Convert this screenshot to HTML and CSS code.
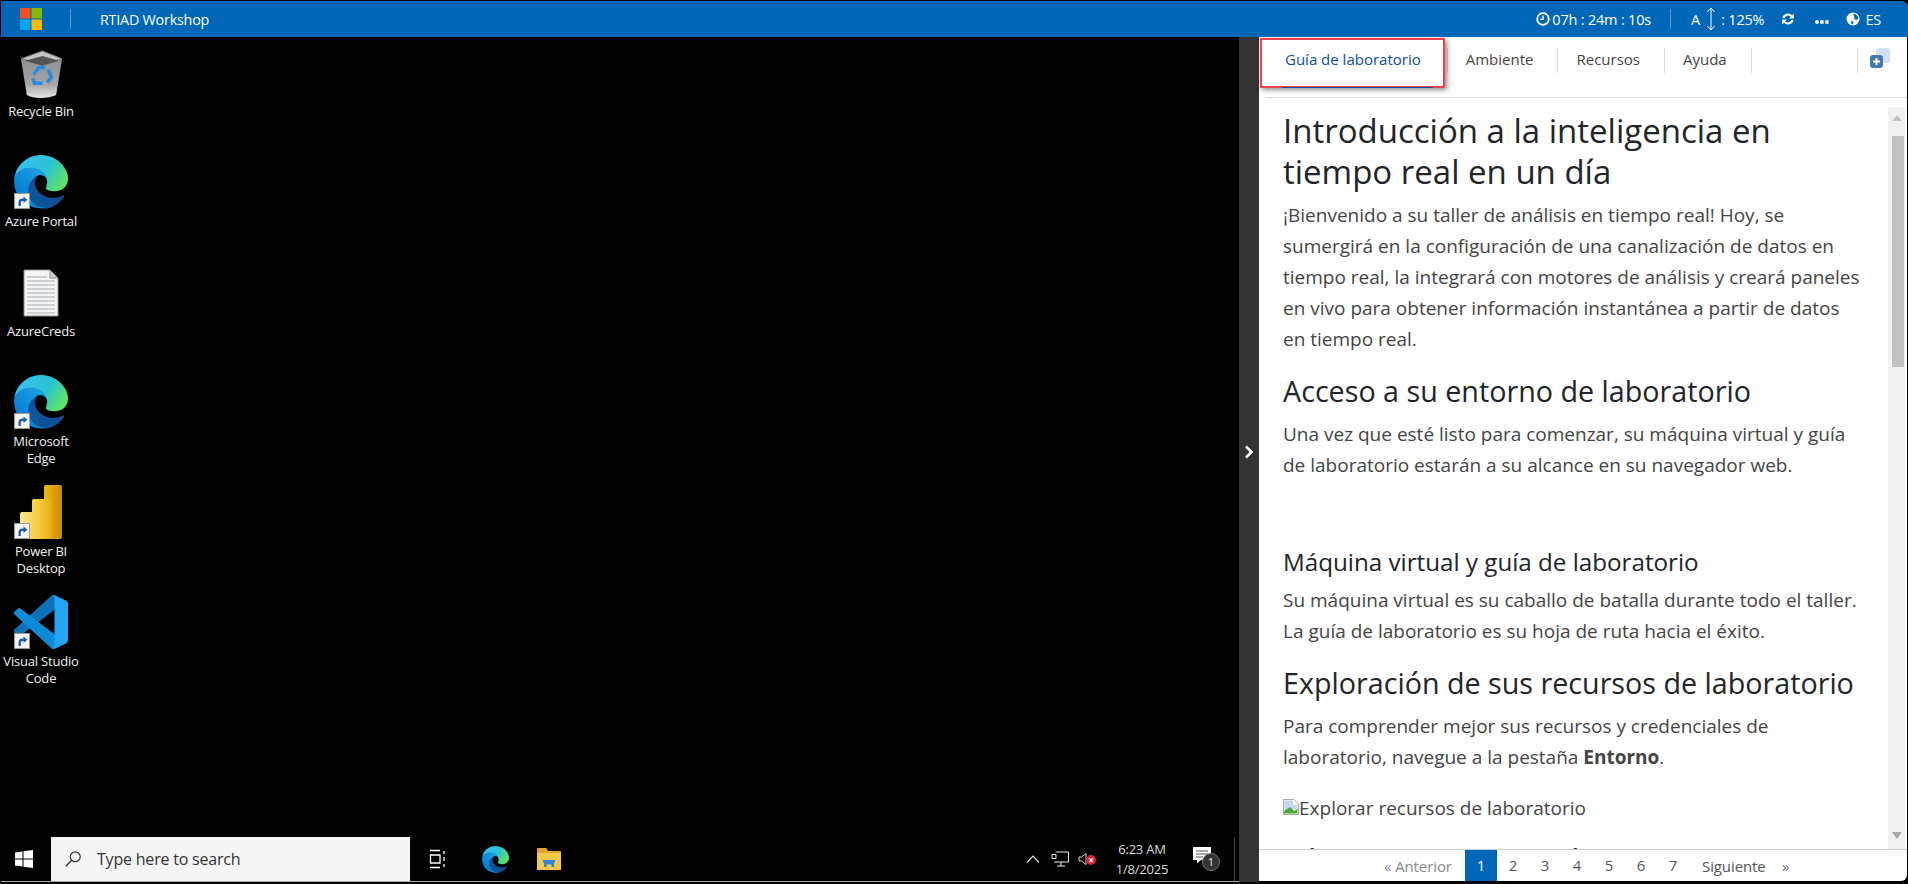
FILE: index.html
```html
<!DOCTYPE html>
<html>
<head>
	<title>RTIAD Workshop</title>
	<meta charset="utf-8">
	<link rel="stylesheet" href="styles.css">
</head>
<body>
<svg class="defs" width="0" height="0">
	<defs>
		<linearGradient id="edgeBottom" x1="0" y1="1" x2="1" y2="0.6"><stop offset="0" stop-color="#0c59a4"/><stop offset="1" stop-color="#114a8b"/></linearGradient>
		<linearGradient id="edgeMid" x1="0.8" y1="0.3" x2="0.1" y2="0.9"><stop offset="0" stop-color="#1b9de2"/><stop offset="1" stop-color="#0078d4"/></linearGradient>
		<linearGradient id="edgeTop" x1="0.1" y1="0.2" x2="1" y2="0.6"><stop offset="0" stop-color="#35c1f1"/><stop offset="0.55" stop-color="#2bc3d2"/><stop offset="1" stop-color="#5be566"/></linearGradient>
		<linearGradient id="binBody" x1="0" y1="0" x2="0" y2="1"><stop offset="0" stop-color="#8b8b8b"/><stop offset="0.7" stop-color="#a5a5a5"/><stop offset="1" stop-color="#e4e4e4"/></linearGradient>
		<linearGradient id="bar1" x1="0" y1="0" x2="1" y2="0"><stop offset="0" stop-color="#f2b90e"/><stop offset="1" stop-color="#c98a06"/></linearGradient>
		<linearGradient id="bar2" x1="0" y1="0" x2="1" y2="0"><stop offset="0" stop-color="#fbd84f"/><stop offset="1" stop-color="#e8ad12"/></linearGradient>
		<linearGradient id="bar3" x1="0" y1="0" x2="1" y2="0"><stop offset="0" stop-color="#fde98f"/><stop offset="1" stop-color="#f6ca3d"/></linearGradient>
		<symbol id="edge" viewBox="0 0 260 260">
			<path fill="url(#edgeBottom)" d="M235.68 195.46a93.73 93.73 0 0 1-10.54 4.71 101.87 101.87 0 0 1-35.9 6.46c-47.32 0-88.54-32.55-88.54-74.32A31.48 31.48 0 0 1 117.13 105c-42.8 1.8-53.8 46.4-53.8 72.53 0 73.88 68.09 81.37 82.76 81.37 7.91 0 19.84-2.3 27-4.56l1.31-.44a128.34 128.34 0 0 0 66.6-52.8 4 4 0 0 0-5.32-5.64z"/>
			<path fill="url(#edgeMid)" d="M105.73 241.42A79.2 79.2 0 0 1 83 220.1a80.58 80.58 0 0 1 29.47-119.8c3.12-1.47 8.45-4.13 15.54-4a32.35 32.35 0 0 1 25.69 13 31.88 31.88 0 0 1 6.36 18.66c0-.21 24.46-79.6-80-79.6-43.9 0-80 41.66-80 78.21a130.15 130.15 0 0 0 12.11 56 128 128 0 0 0 156.38 67.11 75.55 75.55 0 0 1-62.78-8.28z"/>
			<path fill="url(#edgeTop)" d="M156.33 153.32c-.81 1.05-3.3 2.5-3.3 5.66 0 2.61 1.7 5.12 4.72 7.23 14.38 10 41.49 8.68 41.56 8.68a59.56 59.56 0 0 0 30.3-8.36A61.38 61.38 0 0 0 260 114.13c.26-22.41-8-37.31-11.34-43.91C227.46 28.76 181.7 0 128 0A128 128 0 0 0 0 126.2c.52-36.54 36.8-66.05 80-66.05 3.5 0 23.46.34 42 10.07a72.57 72.57 0 0 1 30.92 29.34c6.11 10.64 7.2 24.1 7.2 29.46s-2.73 13.31-3.79 14.3z"/>
		</symbol>
		<symbol id="shortcut" viewBox="0 0 16 16">
			<rect x="0.5" y="0.5" width="15" height="15" fill="#f4f4f4" stroke="#9a9a9a"/>
			<path d="M4.5 13v-3.5c0-2.5 1.500-4 4-4H9.500V3.500L13.500 6.800 9.500 10V8H8.500C7 8 6.800 9 6.800 10.500V13z" fill="#1f5fa8"/>
		</symbol>
	</defs>
</svg>

<div class="topbar">
	<svg class="ms-logo" viewBox="0 0 22 22" width="22" height="22">
		<rect width="10.500" height="10.500" fill="#f25022"/><rect x="11.500" width="10.500" height="10.500" fill="#7fba00"/>
		<rect y="11.500" width="10.500" height="10.500" fill="#00a4ef"/><rect x="11.500" y="11.500" width="10.500" height="10.500" fill="#ffb900"/>
	</svg>
	<span class="top-sep first"></span>
	<span class="top-title">RTIAD Workshop</span>
	<div class="top-right">
		<svg class="t-clock" viewBox="0 0 14 14" width="14" height="14"><circle cx="7" cy="7" r="5.800" fill="none" stroke="#fff" stroke-width="1.800"/><path d="M7 3.500V7.300H4.200" fill="none" stroke="#fff" stroke-width="1.400"/></svg>
		<span class="t-timer">07h : 24m : 10s</span>
		<span class="top-sep"></span>
		<span class="t-a">A</span>
		<svg class="t-arrow" viewBox="0 0 10 24" width="10" height="24"><path d="M5 1V23M1.500 5L5 1L8.500 5M1.500 19L5 23L8.500 19" fill="none" stroke="#fff" stroke-width="1"/></svg>
		<span class="t-zoom">: 125%</span>
		<svg class="t-refresh" viewBox="0 0 14 14" width="14" height="14"><path d="M1.500 6A5.500 5 0 0 1 11 3.200L13 1.500V6.500H8L9.700 4.800A3.400 3.200 0 0 0 3.800 6zM12.500 8A5.500 5 0 0 1 3 10.800L1 12.500V7.500H6L4.300 9.200A3.400 3.200 0 0 0 10.200 8z" fill="#fff"/></svg>
		<span class="t-dots"><i></i><i></i><i></i></span>
		<svg class="t-globe" viewBox="0 0 14 14" width="14" height="14"><circle cx="7" cy="7" r="6.500" fill="#fff"/><path d="M7.500 1.500C10 2 12 4 12.500 6.500L10.500 8 8.500 7 8 4.500zM5 8.500L7.500 10 7 12.500 5.500 12z" fill="#0067b8"/></svg>
		<span class="t-lang">ES</span>
	</div>
</div>

<div class="main">
	<div class="desktop">
		<div class="icons">
			<div class="dicon">
				<div class="dpic">
					<svg viewBox="0 0 46 50" width="45" height="49"><path d="M2 9L24 1 44 9 38 46C30 50 14 50 8 46z" fill="url(#binBody)"/><path d="M2 9L24 1 44 9 24 14z" fill="#c4c4c4" stroke="#777"/><path d="M6 11L24 16 41 11 24 6z" fill="#555"/>
						<g fill="none" stroke="#1f8ee8" stroke-width="3.500"><path d="M15 25L20 18H27"/><path d="M30 20L33 28 29 33"/><path d="M24 34H16L14 29"/></g></svg>
				</div>
				<span>Recycle Bin</span>
			</div>
			<div class="dicon">
				<div class="dpic"><svg width="54" height="54"><use href="#edge"/></svg><svg class="sc" width="16" height="16"><use href="#shortcut"/></svg></div>
				<span>Azure Portal</span>
			</div>
			<div class="dicon">
				<div class="dpic">
					<svg class="doc" viewBox="0 0 36 48" width="36" height="48"><path d="M1 1H27L35 9V47H1z" fill="#f6f6f6" stroke="#8c8c8c"/><path d="M27 1V9H35z" fill="#d0d0d0" stroke="#8c8c8c"/>
						<path d="M4 8H24M4 12H32M4 16H32M4 20H32M4 24H32M4 28H32M4 32H32M4 36H32M4 40H32M4 44H32" stroke="#bcc2c6" stroke-width="1.500"/></svg>
				</div>
				<span>AzureCreds</span>
			</div>
			<div class="dicon">
				<div class="dpic"><svg width="54" height="54"><use href="#edge"/></svg><svg class="sc" width="16" height="16"><use href="#shortcut"/></svg></div>
				<span>Microsoft<br>Edge</span>
			</div>
			<div class="dicon">
				<div class="dpic">
					<svg viewBox="0 0 42 54" width="42" height="54"><rect x="24" width="18" height="54" rx="2" fill="url(#bar1)"/><rect x="12" y="14" width="20" height="40" rx="2" fill="url(#bar2)"/><rect y="27" width="19" height="27" rx="2" fill="url(#bar3)"/></svg>
					<svg class="sc pbi" width="16" height="16"><use href="#shortcut"/></svg>
				</div>
				<span>Power BI<br>Desktop</span>
			</div>
			<div class="dicon">
				<div class="dpic">
					<svg viewBox="0 0 100 100" width="54" height="54">
						<path fill="#0b72b9" d="M96.46 10.800L75.860 .87a6.200 6.200 0 0 0-7.100 1.200L1.360 63.580a4.170 4.170 0 0 0 0 6.160l5.500 5.010a4.170 4.170 0 0 0 5.330.24L93.400 13.330a4.140 4.140 0 0 1 6.600 3.080v-.24a6.250 6.250 0 0 0-3.540-5.370z"/>
						<path fill="#0e8ad8" d="M96.460 89.200L75.860 99.130a6.200 6.200 0 0 1-7.100-1.200L1.360 36.420a4.170 4.170 0 0 1 0-6.160l5.500-5.010a4.170 4.170 0 0 1 5.330-.24L93.400 86.670a4.140 4.140 0 0 0 6.600-3.080v.24a6.250 6.250 0 0 1-3.540 5.370z"/>
						<path fill="#23a5f5" d="M75.870 99.130a6.200 6.200 0 0 1-7.100-1.200C71.070 100.230 75 98.600 75 95.330V4.670c0-3.270-3.930-4.900-6.230-2.600a6.200 6.200 0 0 1 7.100-1.200l20.590 9.900A6.250 6.250 0 0 1 100 16.410v67.170a6.250 6.250 0 0 1-3.540 5.630z"/>
					</svg>
					<svg class="sc" width="16" height="16"><use href="#shortcut"/></svg>
				</div>
				<span>Visual Studio<br>Code</span>
			</div>
		</div>

		<div class="taskbar">
			<svg class="tb-win" viewBox="0 0 18 18" width="18" height="18"><path d="M0 2.500L7.500 1.400V8.500H0zM8.500 1.300L18 0V8.500H8.500zM0 9.500H7.500V16.600L0 15.500zM8.500 9.500H18V18L8.500 16.700z" fill="#fff"/></svg>
			<div class="tb-search">
				<svg viewBox="0 0 20 20" width="18" height="18"><circle cx="12.500" cy="7.500" r="5.500" fill="none" stroke="#333" stroke-width="1.300"/><path d="M8.500 11.500L2 18" stroke="#333" stroke-width="1.500"/></svg>
				<span>Type here to search</span>
			</div>
			<svg class="tb-view" viewBox="0 0 18 20" width="18" height="20"><path d="M1 1.500H11M1 18.500H11M1.500 6H11V14H1.500z M15 2V5M15 8V12M15 15V18" fill="none" stroke="#fff" stroke-width="1.300"/></svg>
			<svg class="tb-edge" width="27" height="27"><use href="#edge"/></svg>
			<svg class="tb-folder" viewBox="0 0 24 24" width="24" height="24"><path d="M0 1H9L11 4H24V23H0z" fill="#f3c94b"/><path d="M0 1H9L11 4H24V6H0z" fill="#e2a52b"/><path d="M7 20V15H17V20H14.500V17.500H9.500V20z" fill="#2b88d8"/><rect x="6" y="13" width="12" height="2.500" fill="#2b88d8"/></svg>
			<div class="tray">
				<svg class="tr-up" viewBox="0 0 14 8" width="14" height="8"><path d="M1 7.500L7 1.200 13 7.500" fill="none" stroke="#ddd" stroke-width="1.200"/></svg>
				<svg class="tr-net" viewBox="0 0 18 16" width="18" height="16"><path d="M4.500 1H17.500V11H3M10 11V15M6 15H14M1 3.500H5V7.500H1z" fill="none" stroke="#eee"/></svg>
				<div class="tr-vol">
					<svg viewBox="0 0 10 14" width="10" height="14"><path d="M1 5H3.500L8 1.500V12.500L3.500 9H1z" fill="none" stroke="#ddd"/></svg>
					<span class="tr-x">×</span>
				</div>
				<div class="tr-time"><span>6:23 AM</span><span>1/8/2025</span></div>
				<div class="tr-note">
					<svg viewBox="0 0 18 17" width="18" height="17"><path d="M0 0H18V13H8L4 16.500V13H0z" fill="#fff"/><path d="M3 4H15M3 7H15M3 10H10" stroke="#555"/></svg>
					<span class="tr-badge">1</span>
				</div>
				<span class="tr-line"></span>
			</div>
		</div>
	</div>

	<div class="splitter">
		<svg viewBox="0 0 10 14" width="10" height="14"><path d="M2 1.500L7.500 7 2 12.500" fill="none" stroke="#fff" stroke-width="2.600"/></svg>
	</div>

	<div class="panel">
		<div class="tabs">
			<span class="tab active">Guía de laboratorio</span>
			<span class="tab">Ambiente</span>
			<span class="tab">Recursos</span>
			<span class="tab">Ayuda</span>
			<div class="tab-tool">
				<svg viewBox="0 0 20 20" width="20" height="20"><rect x="6" y="0" width="14" height="15" rx="3" fill="#d3e0f2"/><rect x="0" y="7" width="13" height="13" rx="3" fill="#4277b5"/><path d="M6.500 10V17M3 13.500H10" stroke="#fff" stroke-width="2"/></svg>
			</div>
			<span class="redbox"></span>
		</div>
		<div class="body">
			<div class="guide">
				<h1>Introducción a la inteligencia en tiempo real en un día</h1>
				<p>¡Bienvenido a su taller de análisis en tiempo real! Hoy, se sumergirá en la configuración de una canalización de datos en tiempo real, la integrará con motores de análisis y creará paneles en vivo para obtener información instantánea a partir de datos en tiempo real.</p>
				<h2>Acceso a su entorno de laboratorio</h2>
				<p>Una vez que esté listo para comenzar, su máquina virtual y guía de laboratorio estarán a su alcance en su navegador web.</p>
				<h3>Máquina virtual y guía de laboratorio</h3>
				<p>Su máquina virtual es su caballo de batalla durante todo el taller. La guía de laboratorio es su hoja de ruta hacia el éxito.</p>
				<h2>Exploración de sus recursos de laboratorio</h2>
				<p>Para comprender mejor sus recursos y credenciales de laboratorio, navegue a la pestaña <b>Entorno</b>.</p>
				<p class="broken">
					<svg viewBox="0 0 16 16" width="16" height="16"><path d="M.5.5H11L15.500 5V15.500H.5z" fill="#fff" stroke="#a8a8a8"/><path d="M1.500 1.500H10V6H14.500V10L1.500 12z" fill="#c4d6f0"/><path d="M1 14.500V12L7 8 11 12 14.500 10V14.500z" fill="#4fa83d"/></svg>Explorar recursos de laboratorio
				</p>
				<h2>Cómo utilizar la función de aumento</h2>
			</div>
			<div class="scroll">
				<span class="arr up"></span>
				<span class="thumb"></span>
				<span class="arr down"></span>
			</div>
		</div>
		<div class="pager">
			<span class="prev">« Anterior</span>
			<span class="num on">1</span>
			<span class="num">2</span>
			<span class="num">3</span>
			<span class="num">4</span>
			<span class="num">5</span>
			<span class="num">6</span>
			<span class="num">7</span>
			<span class="next">Siguiente</span>
			<span class="last">»</span>
		</div>
	</div>
</div>
</body>
</html>
```

FILE: styles.css
```css
body {
	margin: 0;
	padding: 0;
	width: 1908px;
	height: 884px;
	overflow: hidden;
	background: #000;
	font-family: "Open Sans", "Noto Sans", sans-serif;
}
.defs { display: block; height: 0; }

.topbar {
	height: 36px;
	margin: 1px 0 0 1px;
	background: #0067b8;
	color: #fff;
	display: flex;
	align-items: center;
	font-size: 14.500px;
	border-top-right-radius: 6px;
}
.ms-logo { margin-left: 19px; }
.top-sep { width: 1px; height: 20px; background: #5a9bd5; }
.top-sep.first { margin-left: 28px; }
.top-title { margin-left: 29px; font-size: 14.300px; letter-spacing: -0.2px; }
.top-right { margin-left: auto; display: flex; align-items: center; margin-right: 27px; }
.t-timer { margin-left: 2px; letter-spacing: -0.2px; }
.top-right .top-sep { margin: 0 20px 0 19px; }
.t-zoom { margin-left: 5px; letter-spacing: -0.2px; }
.t-arrow { margin-left: 6px; }
.t-refresh { margin-left: 17px; }
.t-dots { margin-left: 20px; display: flex; gap: 1px; padding-top: 6px; }
.t-dots i { width: 4px; height: 4px; border-radius: 50%; background: #fff; display: block; }
.t-globe { margin-left: 17px; }
.t-lang { margin-left: 5px; letter-spacing: -0.2px; }

.main { display: flex; height: 845px; margin-left: 1px; }

.desktop { width: 1238px; display: flex; flex-direction: column; background: #000; }
.icons { height: 800px; padding-top: 8px; box-sizing: border-box; display: flex; flex-direction: column; }
.dicon {
	width: 80px;
	height: 110px;
	flex: none;
	display: flex;
	flex-direction: column;
	align-items: center;
	color: #f2f2f2;
	font-size: 13px;
	line-height: 17px;
	text-align: center;
	letter-spacing: -0.2px;
}
.dpic { position: relative; height: 54px; display: flex; align-items: flex-end; justify-content: center; margin-bottom: 4px; }
.sc { position: absolute; left: 0; bottom: 0; }
.sc.pbi { left: -6px; }
.doc { margin-bottom: 2px; }

.taskbar { height: 44px; display: flex; align-items: center; background: #000; border-bottom: 1px solid #aaa; }
.tb-win { margin-left: 14px; }
.tb-search {
	margin-left: 18px;
	width: 359px;
	height: 44px;
	background: #f5f5f5;
	display: flex;
	align-items: center;
	color: #333;
	font-size: 16px;
	letter-spacing: -0.2px;
}
.tb-search svg { margin-left: 13px; }
.tb-search span { margin-left: 15px; }
.tb-view { margin-left: 19px; }
.tb-edge { margin-left: 35px; }
.tb-folder { margin-left: 28px; }
.tray { margin-left: auto; display: flex; align-items: center; height: 44px; color: #ddd; }
.tr-up { margin-right: 11px; }
.tr-net { margin-right: 9px; }
.tr-vol { position: relative; width: 18px; height: 14px; margin-right: 16px; }
.tr-vol svg { display: block; }
.tr-x {
	position: absolute;
	left: 8px;
	top: 3px;
	width: 10px;
	height: 10px;
	border-radius: 50%;
	background: #e0222f;
	color: #fff;
	font-size: 10px;
	line-height: 10px;
	text-align: center;
	font-weight: bold;
}
.tr-time { display: flex; flex-direction: column; align-items: center; font-size: 13px; line-height: 20px; letter-spacing: -0.2px; width: 60px; }
.tr-note { position: relative; margin-left: 21px; width: 28px; height: 24px; }
.tr-note svg { display: block; }
.tr-badge {
	position: absolute;
	left: 9px;
	top: 6px;
	width: 16px;
	height: 16px;
	border-radius: 50%;
	background: #333;
	border: 1px solid #777;
	color: #eee;
	font-size: 11px;
	line-height: 16px;
	text-align: center;
}
.tr-line { width: 1px; height: 44px; background: #444; margin: 0 4px 0 13px; }

.splitter { width: 20px; background: #333; display: flex; align-items: center; justify-content: center; padding-bottom: 15px; box-sizing: border-box; }

.panel { flex: 1; background: #fff; display: flex; flex-direction: column; position: relative; margin: 0 1px 1px 0; border-bottom-right-radius: 6px; }
.tabs {
	height: 61px;
	flex: none;
	box-sizing: border-box;
	margin-left: 7px;
	border-bottom: 1px solid #ddd;
	display: flex;
	align-items: flex-start;
	font-size: 15px;
	color: #444;
	padding-top: 11px;
}
.tab { padding: 0 24px 0 18px; height: 25px; line-height: 23px; border-right: 1px solid #ddd; font-weight: 500; }
.tab.active { color: #0b4f9e; padding: 0 26px 0 19px; }
.tab-tool { margin-left: auto; border-left: 1px solid #ddd; height: 25px; padding-left: 12px; margin-right: 17px; }
.redbox {
	position: absolute;
	left: 1px;
	top: 1px;
	width: 181px;
	height: 46px;
	border: 2px solid #f4424a;
	box-shadow: 2px 2px 5px rgba(0,0,0,0.45);
}
.redbox::after { content: ""; position: absolute; left: 20px; right: 10px; bottom: -2px; height: 1px; background: #0b4f9e; }

.body { flex: 1; display: flex; min-height: 0; overflow: hidden; }
.guide { flex: 1; padding: 12px 27px 0 24px; color: #333; overflow: hidden; }
.guide h1 { font-size: 33px; line-height: 41px; font-weight: 400; margin: 0 0 8px; color: #212529; }
.guide h2 { font-size: 28.700px; line-height: 36px; font-weight: 400; margin: 18px 0 10px; color: #212529; }
.guide h3 { font-size: 24.200px; line-height: 30px; font-weight: 400; margin: 66px 0 8px; color: #212529; }
.guide p { font-size: 19px; line-height: 31px; margin: 0; color: #444; }
.guide p.broken { margin: 20px 0 5px; }
.broken svg { vertical-align: 0; }

.scroll { width: 17px; margin: 9px 2px 0 0; background: #f1f1f1; position: relative; flex: none; }
.thumb { position: absolute; left: 4px; right: 1px; top: 29px; height: 231px; background: #c1c1c1; }
.arr { position: absolute; left: 4px; width: 0; height: 0; border-left: 5px solid transparent; border-right: 5px solid transparent; }
.arr.up { top: 8px; border-bottom: 6px solid #c1c1c1; }
.arr.down { bottom: 10px; border-top: 7px solid #a9a9a9; }

.pager { height: 31px; flex: none; border-top: 1px solid #ccc; display: flex; align-items: center; font-size: 15px; color: #555; padding-left: 125px; letter-spacing: -0.1px; }
.prev { color: #888; width: 81px; }
.num { width: 32px; height: 31px; line-height: 31px; text-align: center; }
.num.on { background: #0067b8; color: #fff; }
.next { margin-left: 13px; width: 80px; }
.last { color: #666; }
```
